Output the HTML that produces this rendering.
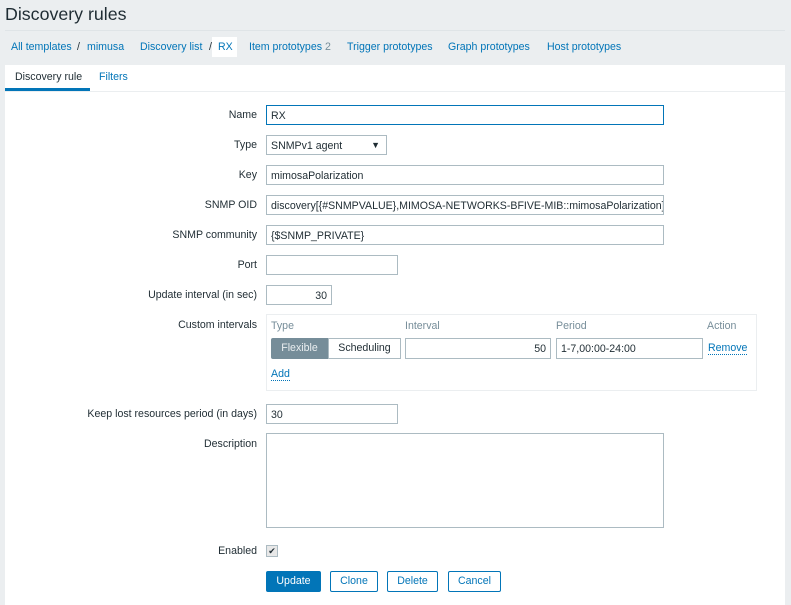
<!DOCTYPE html><html><head><style>
body{margin:0;width:791px;height:600px;background:#ebeef0;font-family:"Liberation Sans",sans-serif;font-size:10.6px;color:#1f2c33;position:relative;overflow:hidden}
.a{position:absolute}
h1{position:absolute;left:5px;top:4px;margin:0;font-size:17.8px;font-weight:normal;color:#1f2c33}
.bc a{color:#0275b8;position:absolute;top:41px}
.sep{position:absolute;top:41px;color:#1f2c33}
.panel{position:absolute;left:5px;top:65px;width:780px;height:540px;background:#fff}
.lbl{position:absolute;right:534px;text-align:right;white-space:nowrap}
.in{position:absolute;left:266px;height:20px;box-sizing:border-box;border:1px solid #acbbc2;background:#fff;padding:4px 4px;white-space:nowrap;overflow:hidden}
.btn{position:absolute;top:571px;height:21px;box-sizing:border-box;border:1px solid #0275b8;color:#0275b8;background:#fff;border-radius:2px;text-align:center;line-height:19px}
.lnk{color:#0275b8;border-bottom:1px dotted #0275b8}
.gray{color:#768d99}
</style></head><body>
<h1>Discovery rules</h1>
<div class="a" style="left:5px;top:30px;width:780px;height:1px;background:#dfe4e7"></div>
<div class="bc">
<a style="left:11px">All templates</a><span class="sep" style="left:77px">/</span><a style="left:87px">mimusa</a>
<a style="left:140px">Discovery list</a><span class="sep" style="left:209px">/</span>
<span class="a" style="left:212px;top:37px;width:25px;height:20px;background:#fff"></span><a style="left:218px;color:#0275b8">RX</a>
<a style="left:249px">Item prototypes <span class="gray">2</span></a>
<a style="left:347px">Trigger prototypes</a><a style="left:448px">Graph prototypes</a><a style="left:547px">Host prototypes</a>
</div>
<div class="panel"></div>
<div class="a" style="left:15px;top:71px">Discovery rule</div>
<div class="a" style="left:99px;top:71px;color:#0275b8">Filters</div>
<div class="a" style="left:5px;top:88px;width:85px;height:3px;background:#0275b8"></div>
<div class="a" style="left:5px;top:91px;width:780px;height:1px;background:#ebeef0"></div>

<div class="lbl" style="top:109px">Name</div><div class="in" style="top:105px;width:398px;border-color:#0275b8">RX</div>
<div class="lbl" style="top:139px">Type</div><div class="in" style="top:135px;width:121px">SNMPv1 agent<span class="a" style="right:6px;top:4px;font-size:9px">▼</span></div>
<div class="lbl" style="top:169px">Key</div><div class="in" style="top:165px;width:398px">mimosaPolarization</div>
<div class="lbl" style="top:199px">SNMP OID</div><div class="in" style="top:195px;width:398px">discovery[{#SNMPVALUE},MIMOSA-NETWORKS-BFIVE-MIB::mimosaPolarization]</div>
<div class="lbl" style="top:229px">SNMP community</div><div class="in" style="top:225px;width:398px">{$SNMP_PRIVATE}</div>
<div class="lbl" style="top:259px">Port</div><div class="in" style="top:255px;width:132px"></div>
<div class="lbl" style="top:289px">Update interval (in sec)</div><div class="in" style="top:285px;width:66px;text-align:right">30</div>
<div class="lbl" style="top:319px">Custom intervals</div>
<div class="a" style="left:266px;top:314px;width:489px;height:75px;border:1px solid #ebeef0"></div>
<div class="a gray" style="left:271px;top:320px">Type</div>
<div class="a gray" style="left:405px;top:320px">Interval</div>
<div class="a gray" style="left:556px;top:320px">Period</div>
<div class="a gray" style="left:707px;top:320px">Action</div>
<div class="a" style="left:271px;top:338px;width:57px;height:21px;background:#768d99;color:#eaeef0;text-align:center;line-height:21px;border-radius:2px 0 0 2px">Flexible</div>
<div class="a" style="left:328px;top:338px;width:73px;height:21px;box-sizing:border-box;border:1px solid #acbbc2;text-align:center;line-height:19px">Scheduling</div>
<div class="in" style="left:405px;top:338px;width:146px;height:21px;text-align:right">50</div>
<div class="in" style="left:556px;top:338px;width:147px;height:21px">1-7,00:00-24:00</div>
<div class="a" style="left:708px;top:342px"><span class="lnk">Remove</span></div>
<div class="a" style="left:271px;top:368px"><span class="lnk">Add</span></div>
<div class="lbl" style="top:408px">Keep lost resources period (in days)</div><div class="in" style="top:404px;width:132px">30</div>
<div class="lbl" style="top:438px">Description</div><div class="in" style="top:433px;width:398px;height:95px"></div>
<div class="lbl" style="top:545px">Enabled</div>
<div class="a" style="left:266px;top:545px;width:10px;height:10px;border:1px solid #acbbc2;background:#e8e8e8;font-size:9px;line-height:10px;text-align:center">✔</div>
<div class="btn" style="left:266px;width:55px;background:#0275b8;color:#fff">Update</div>
<div class="btn" style="left:330px;width:48px">Clone</div>
<div class="btn" style="left:387px;width:51px">Delete</div>
<div class="btn" style="left:448px;width:53px">Cancel</div>
</body></html>
